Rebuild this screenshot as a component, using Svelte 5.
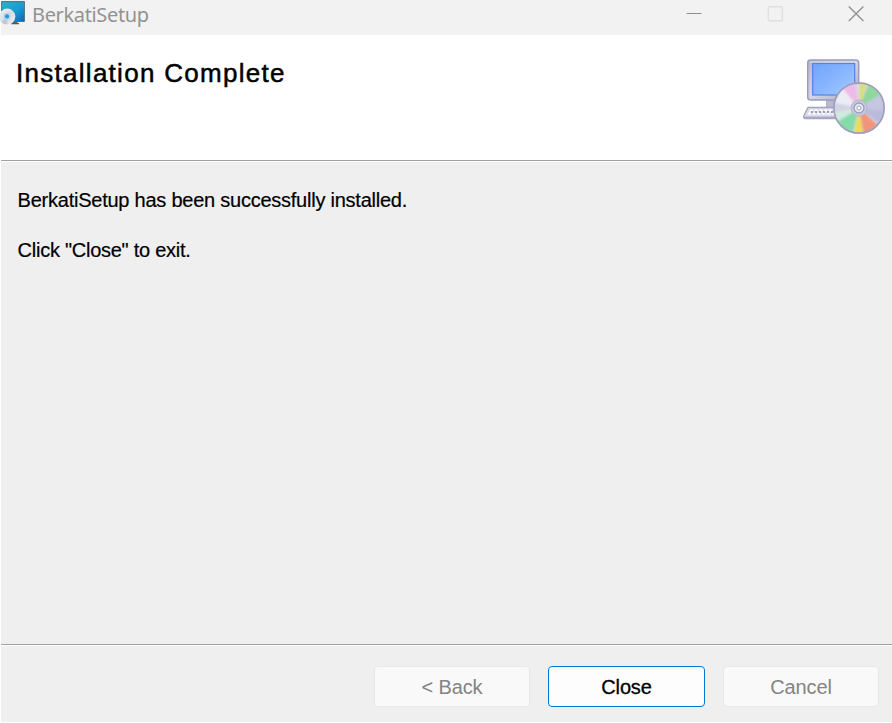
<script>
  const slices = [
    ['#d2d3e4', -100, -78], ['#ececf5', -78, -38], ['#eebbe8', -40, -8],
    ['#d9df72', 2, 18], ['#8fd79c', 22, 58], ['#c4c6e2', 58, 95],
    ['#b9bbdd', 95, 128], ['#f0957c', 132, 170], ['#ecdc4e', 172, 190],
    ['#85dba9', 194, 238], ['#d3e9df', 238, 260]
  ];
  const pt = (a, r) => {
    const t = (a * Math.PI) / 180;
    return `${64 + r * Math.sin(t)} ${58 + -r * Math.cos(t)}`;
  };
  const wedge = (a, b) => `M64 58L${pt(a, 26)}A26 26 0 0 1 ${pt(b, 26)}Z`;
</script>

<main class="window">
  <header class="titlebar">
    <svg class="app-icon" width="25" height="26" viewBox="0 0 25 26">
      <defs>
        <linearGradient id="screen" x1="0" y1="0" x2="1" y2="1">
          <stop offset="0" stop-color="#22b4c9" /><stop offset=".55" stop-color="#1a9bd3" /><stop offset="1" stop-color="#0868b8" />
        </linearGradient>
        <linearGradient id="disc" x1="0" y1="0" x2="1" y2="1">
          <stop offset="0" stop-color="#f3f5f6" /><stop offset=".5" stop-color="#d5dde2" /><stop offset="1" stop-color="#eef1f3" />
        </linearGradient>
      </defs>
      <rect x="1" y="1" width="24" height="21" rx="1" fill="#4b7d91" />
      <rect x="2" y="2.3" width="22" height="19" fill="url(#screen)" />
      <path d="M12 22h5.5v1H19v1.3h-8z" fill="#555e65" />
      <circle cx="7.3" cy="16.6" r="8" fill="url(#disc)" />
      <path d="M7.3 16.6L1.4 22a8 8 0 0 0 6 2.6z" fill="#bfc9cf" />
      <circle cx="7" cy="16.4" r="3.6" fill="#b3d6ea" />
      <circle cx="7" cy="16.4" r="2.1" fill="#2f96d8" />
    </svg>
    <span class="title">BerkatiSetup</span>
    <div class="controls">
      <svg width="16" height="16" viewBox="0 0 16 16"><path d="M.5 7.5h15" stroke="#8f8f8f" /></svg>
      <svg width="16" height="16" viewBox="0 0 16 16"><rect x="1.3" y=".8" width="14" height="14" rx="1" fill="none" stroke="#dfdfdf" stroke-width="1.4" /></svg>
      <svg width="16" height="16" viewBox="0 0 16 16"><path d="M.8.5l14.6 14.4M15.4.5L.8 14.9" stroke="#929292" stroke-width="1.4" /></svg>
    </div>
  </header>

  <section class="banner">
    <h1>Installation Complete</h1>
    <svg class="installer" width="97" height="95" viewBox="0 0 97 95">
      <defs>
        <linearGradient id="glass" x1="0" y1="0" x2="1" y2="1">
          <stop offset="0" stop-color="#70a5fb" /><stop offset=".5" stop-color="#87b5ff" /><stop offset="1" stop-color="#a6ccff" />
        </linearGradient>
        <linearGradient id="shell" x1="0" y1="0" x2="1" y2="1">
          <stop offset="0" stop-color="#b5b6ce" /><stop offset=".5" stop-color="#d5d5e6" /><stop offset="1" stop-color="#a5a5c4" />
        </linearGradient>
        <filter id="blend" x="-10%" y="-10%" width="120%" height="120%"><feGaussianBlur stdDeviation="1.2" /></filter>
        <filter id="edge"><feGaussianBlur stdDeviation=".7" /></filter>
        <clipPath id="discClip"><circle cx="64" cy="58" r="24.3" /></clipPath>
      </defs>
      <g filter="url(#edge)">
        <path d="M31 49h14v9H31z" fill="#b8b8d0" />
        <path d="M13 57.5h37V68.5H10q-2-1-1-3z" fill="#dedeea" stroke="#a3a3bf" stroke-width="1.4" />
        <path d="M15 60.5h34M13 63.5h36" stroke="#fff" stroke-width="2" stroke-dasharray="3 1.7" />
        <path d="M16 62h34" stroke="#8384a5" stroke-width="1.3" stroke-dasharray="2 2" />
        <path d="M10 67.5h40" stroke="#a9a9c6" stroke-width="2" />
        <rect x="12.7" y="10" width="51" height="40" rx="3" fill="url(#shell)" stroke="#9b9db9" stroke-width="1.5" />
        <path d="M15 12h46" stroke="#e0e1ed" />
        <rect x="17.7" y="13.5" width="42" height="31.5" fill="url(#glass)" stroke="#5184df" stroke-width="1.2" />
        <circle cx="64" cy="58" r="25" fill="#dadbe8" stroke="#9d9fbd" stroke-width="2" />
      </g>
      <g clip-path="url(#discClip)"><g filter="url(#blend)">
        {#each slices as [color, a, b]}<path d={wedge(a, b)} fill={color} />{/each}
      </g></g>
      <g filter="url(#edge)">
        <circle cx="64" cy="58" r="8" fill="#c8c9df" stroke="#b4b5cf" />
        <circle cx="64" cy="58" r="5" fill="#e6e6f0" stroke="#9c9ebe" stroke-width="1.3" />
        <circle cx="64" cy="58" r="2" fill="#fff" stroke="#a4a5c0" />
      </g>
    </svg>
  </section>

  <section class="content">
    <p class="message">BerkatiSetup has been successfully installed.</p>
    <p>Click "Close" to exit.</p>
  </section>

  <footer>
    <button disabled>&lt; Back</button>
    <button class="primary">Close</button>
    <button disabled>Cancel</button>
  </footer>
</main>

<style>
  :global(body) { background: #fff; }
  .window {
    box-sizing: border-box; width: 892px; height: 723px; padding: 0 0 1px 1px;
    display: flex; flex-direction: column; overflow: hidden;
    font-family: "Liberation Sans", Arial, sans-serif; color: #000; background: #fff;
  }
  .titlebar { height: 35px; flex: none; display: flex; align-items: flex-start; background: #f2f2f2; }
  .app-icon { margin-left: -1px; }
  .title {
    margin: 1px 0 0 7px; font: 20px/28px "Noto Sans", sans-serif; color: #929292;
    letter-spacing: -.35px; white-space: nowrap;
  }
  .controls { margin: 6px 28px 0 auto; display: flex; gap: 65px; }
  .controls svg { display: block; }
  .banner {
    height: 125px; flex: none; display: flex; justify-content: space-between;
    background: #fff; border-bottom: 1px solid #a0a0a0;
  }
  h1 {
    margin: 22px 0 0 15px; font-size: 26px; line-height: 32px; font-weight: 400;
    letter-spacing: 1.28px; white-space: nowrap; -webkit-text-stroke: .5px #000;
  }
  .installer { margin-top: 15px; }
  .content { flex: 1; border-top: 1px solid #fff; background: #efefef; padding: 26px 16px 0; }
  p {
    margin: 0 0 26px .6px; height: 24px; font-size: 20px; line-height: 24px;
    letter-spacing: -.26px; white-space: nowrap; -webkit-text-stroke: .2px #000;
  }
  .message { letter-spacing: -.24px; }
  footer {
    box-sizing: border-box; height: 78px; flex: none; border-top: 1px solid #a0a0a0;
    box-shadow: inset 0 1px #fff; background: #efefef; display: flex; justify-content: flex-end;
    padding: 21px 13px 0 0;
  }
  button {
    box-sizing: border-box; width: 156px; height: 41px; margin: 0 0 0 18px; padding: 0;
    font: 20px/24px "Liberation Sans", Arial, sans-serif; letter-spacing: -.15px;
    border: 1px solid #e8e8e8; border-radius: 4px; background: #f9f9f9; color: #838383;
  }
  button.primary {
    width: 157px; border-color: #0078d4; background: #fdfdfd; color: #000;
    -webkit-text-stroke: .3px #000;
  }
</style>
